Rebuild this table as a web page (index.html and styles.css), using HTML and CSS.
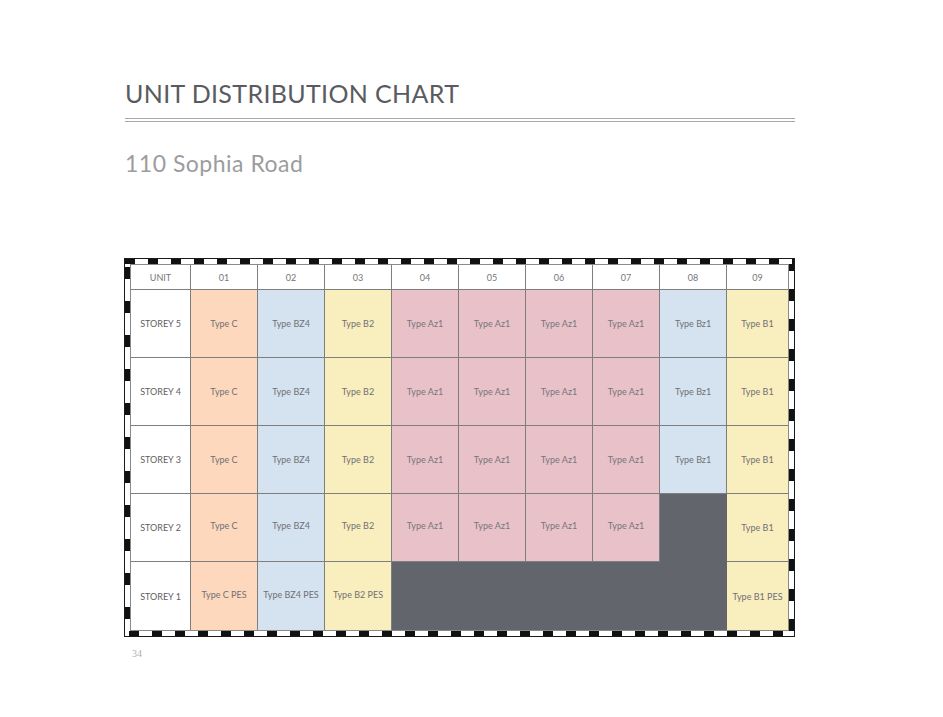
FILE: index.html
```html
<!DOCTYPE html>
<html>
<head>
<meta charset="utf-8">
<link rel="stylesheet" href="styles.css">
</head>
<body>
<div class="page">
  <h1 class="title">UNIT DISTRIBUTION CHART</h1>
  <div class="rule"></div>
  <h2 class="subtitle">110 Sophia Road</h2>
  <div class="frame">
    <div class="grid">
      <div class="cell head">UNIT</div>
      <div class="cell head">01</div>
      <div class="cell head">02</div>
      <div class="cell head">03</div>
      <div class="cell head">04</div>
      <div class="cell head">05</div>
      <div class="cell head">06</div>
      <div class="cell head">07</div>
      <div class="cell head">08</div>
      <div class="cell head last-col">09</div>

      <div class="cell label">STOREY 5</div>
      <div class="cell orange">Type C</div>
      <div class="cell blue">Type BZ4</div>
      <div class="cell yellow">Type B2</div>
      <div class="cell pink">Type Az1</div>
      <div class="cell pink">Type Az1</div>
      <div class="cell pink">Type Az1</div>
      <div class="cell pink">Type Az1</div>
      <div class="cell blue">Type Bz1</div>
      <div class="cell yellow last-col">Type B1</div>

      <div class="cell label">STOREY 4</div>
      <div class="cell orange">Type C</div>
      <div class="cell blue">Type BZ4</div>
      <div class="cell yellow">Type B2</div>
      <div class="cell pink">Type Az1</div>
      <div class="cell pink">Type Az1</div>
      <div class="cell pink">Type Az1</div>
      <div class="cell pink">Type Az1</div>
      <div class="cell blue">Type Bz1</div>
      <div class="cell yellow last-col">Type B1</div>

      <div class="cell label">STOREY 3</div>
      <div class="cell orange">Type C</div>
      <div class="cell blue">Type BZ4</div>
      <div class="cell yellow">Type B2</div>
      <div class="cell pink">Type Az1</div>
      <div class="cell pink">Type Az1</div>
      <div class="cell pink">Type Az1</div>
      <div class="cell pink">Type Az1</div>
      <div class="cell blue">Type Bz1</div>
      <div class="cell yellow last-col">Type B1</div>

      <div class="cell label">STOREY 2</div>
      <div class="cell orange up">Type C</div>
      <div class="cell blue up">Type BZ4</div>
      <div class="cell yellow up">Type B2</div>
      <div class="cell pink up">Type Az1</div>
      <div class="cell pink up">Type Az1</div>
      <div class="cell pink up">Type Az1</div>
      <div class="cell pink up">Type Az1</div>
      <div class="cell dark dark-top"></div>
      <div class="cell yellow last-col">Type B1</div>

      <div class="cell label last-row">STOREY 1</div>
      <div class="cell orange last-row up">Type C PES</div>
      <div class="cell blue last-row up">Type BZ4 PES</div>
      <div class="cell yellow last-row up">Type B2 PES</div>
      <div class="cell dark dark-wide last-row"></div>
      <div class="cell yellow last-row last-col">Type B1 PES</div>
    </div>
  </div>
  <div class="pageno">34</div>
</div>
</body>
</html>
```
FILE: styles.css
```css
* { box-sizing: border-box; }
html, body { margin: 0; padding: 0; background: #ffffff; }
.page {
  padding: 78px 0 0 124px;
  width: 796px;
  font-family: "Lato", "Open Sans", sans-serif;
}
.title {
  margin: 0 0 0 1px;
  font-weight: 400;
  font-size: 25px;
  line-height: 30px;
  letter-spacing: 0.35px;
  color: #5a5b61;
}
.rule {
  margin: 10px 0 0 1px;
  width: 670px;
  height: 4px;
  border-top: 1px solid #a8a8a8;
  border-bottom: 1px solid #a8a8a8;
}
.subtitle {
  margin: 26px 0 0 1px;
  font-weight: 400;
  font-size: 23px;
  line-height: 30px;
  letter-spacing: 0.5px;
  color: #9c9c9e;
}
.frame {
  margin-top: 80px;
  width: 671px;
  border: 1px solid #1a1a1a;
  padding: 5px;
  background:
    repeating-linear-gradient(90deg, #111 0 10px, #fff 10px 23px) top left / 100% 5px no-repeat,
    repeating-linear-gradient(90deg, #fff 0 4px, #111 4px 14px, #fff 14px 23px) bottom left / 100% 5px no-repeat,
    repeating-linear-gradient(180deg, #fff 0 8px, #111 8px 20px, #fff 20px 34px) top left / 5px 100% no-repeat,
    repeating-linear-gradient(180deg, #111 0 12px, #fff 12px 30px) top right / 5px 100% no-repeat,
    #fff;
}
.grid {
  display: grid;
  grid-template-columns: 60px repeat(8, 67px) 1fr;
  grid-template-rows: 25px repeat(5, 68px);
  border: 1px solid #8a8a8a;
  background: #fff;
}
.cell {
  display: flex;
  align-items: center;
  justify-content: center;
  font-size: 9px;
  color: #707075;
  border-right: 1.5px solid #7e7e7e;
  border-bottom: 1.5px solid #7e7e7e;
  white-space: nowrap;
}
.cell.up { padding-bottom: 4px; }
.head { color: #76767a; font-size: 9px; }
.label { color: #5e5e63; font-size: 9px; }
.last-col { border-right: none; }
.last-row { border-bottom: none; }
.orange { background: #fdd8bd; }
.blue { background: #d5e2ef; }
.yellow { background: #f9eebe; }
.pink { background: #e8c1c9; color: #76767a; }
.dark { background: #63656d; border-color: #63656d; }
.dark-top { grid-column: 9; grid-row: 5; border-bottom: none; }
.dark-wide { grid-column: 5 / span 5; grid-row: 6; }
.pageno {
  margin: 11px 0 0 8px;
  font-family: "Liberation Serif", serif;
  font-size: 10px;
  color: #b0b0b0;
}
```
